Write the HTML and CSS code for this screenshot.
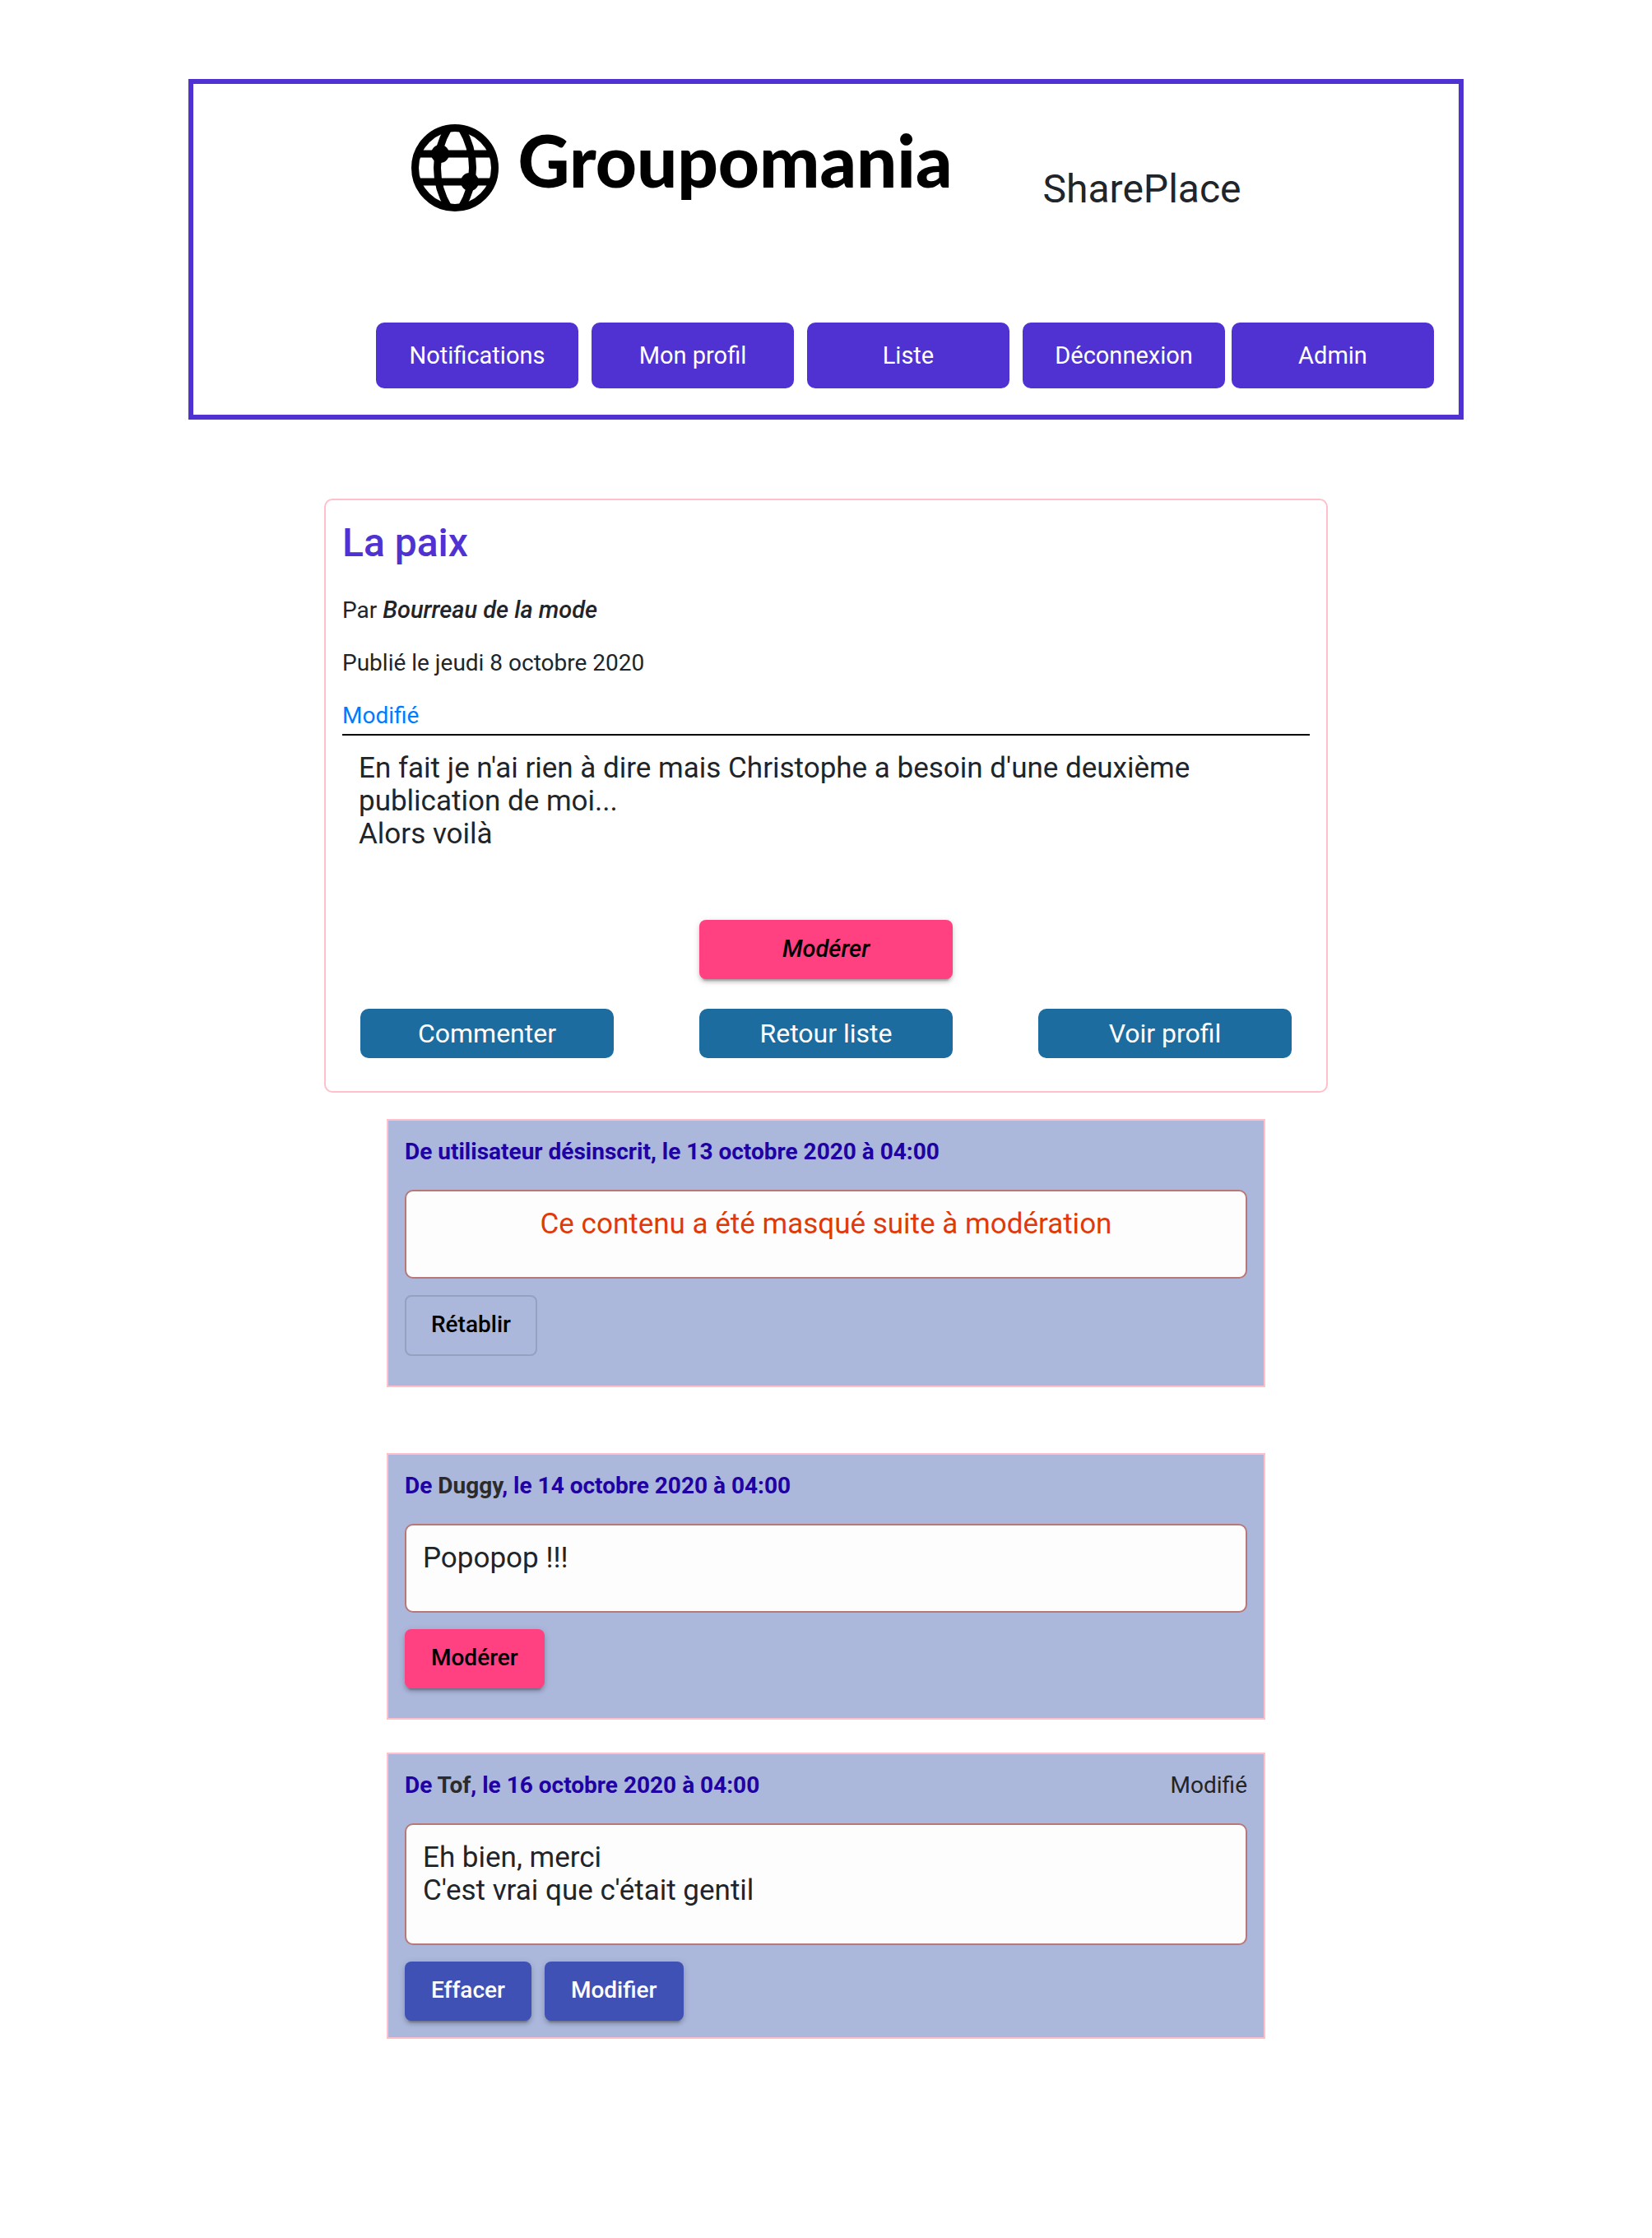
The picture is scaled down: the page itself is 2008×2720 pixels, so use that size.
FILE: index.html
```html
<!DOCTYPE html>
<html lang="fr">
<head>
<meta charset="utf-8">
<meta name="viewport" content="width=device-width, initial-scale=1">
<title>Groupomania – SharePlace</title>
<link rel="stylesheet" href="styles.css">
</head>
<body>
<header class="site-header">
  <div class="brand">
    <a class="logo" href="#">
      <svg class="globe" viewBox="0 0 108 108" aria-hidden="true">
        <g fill="none" stroke="#000" stroke-width="9">
          <circle cx="54" cy="54" r="48.500"/>
          <path d="M8 37H100M8 71H100"/>
          <path d="M46 6C28 36 28 72 46 102M62 6C80 36 80 72 62 102"/>
        </g>
        <circle cx="36" cy="37" r="11"/>
        <circle cx="72" cy="71" r="11"/>
      </svg>
      <span class="logo-name">Groupomania</span>
    </a>
    <h1 class="app-name">SharePlace</h1>
  </div>
  <nav class="main-nav">
    <button type="button" class="nav-button">Notifications</button>
    <button type="button" class="nav-button">Mon profil</button>
    <button type="button" class="nav-button">Liste</button>
    <div class="nav-pair">
      <button type="button" class="nav-button">Déconnexion</button>
      <button type="button" class="nav-button">Admin</button>
    </div>
  </nav>
</header>
<main>
  <article class="post">
    <h2 class="post-title">La paix</h2>
    <div class="post-meta">
      <p>Par <em>Bourreau de la mode</em></p>
      <p>Publié le jeudi 8 octobre 2020</p>
      <p class="edited">Modifié</p>
    </div>
    <p class="post-text">En fait je n'ai rien à dire mais Christophe a besoin d'une deuxième publication de moi...<br>Alors voilà</p>
    <div class="post-actions">
      <button type="button" class="button accent moderate">Modérer</button>
      <button type="button" class="action">Commenter</button>
      <button type="button" class="action">Retour liste</button>
      <button type="button" class="action">Voir profil</button>
    </div>
  </article>
  <section class="comments">
    <article class="comment hidden-content">
      <header class="comment-head"><h3>De utilisateur désinscrit, le 13 octobre 2020 à 04:00</h3></header>
      <p class="comment-text">Ce contenu a été masqué suite à modération</p>
      <div class="comment-actions"><button type="button" class="button outline">Rétablir</button></div>
    </article>
    <article class="comment">
      <header class="comment-head"><h3>De <a href="#">Duggy</a>, le 14 octobre 2020 à 04:00</h3></header>
      <p class="comment-text">Popopop !!!</p>
      <div class="comment-actions"><button type="button" class="button accent">Modérer</button></div>
    </article>
    <article class="comment own">
      <header class="comment-head"><h3>De <a href="#">Tof</a>, le 16 octobre 2020 à 04:00</h3><span>Modifié</span></header>
      <p class="comment-text">Eh bien, merci<br>C'est vrai que c'était gentil</p>
      <div class="comment-actions">
        <button type="button" class="button primary">Effacer</button>
        <button type="button" class="button primary">Modifier</button>
      </div>
    </article>
  </section>
</main>
</body>
</html>
```
FILE: styles.css
```css
*, *::before, *::after { box-sizing: border-box; }

body {
  margin: 0;
  padding: 96px 16px;
  background: #fff;
  color: #212529;
  font: 28px/36px Roboto, "Liberation Sans", sans-serif;
}

h1, h2, h3, p { margin: 0; }

button {
  border: 0;
  cursor: pointer;
  font: inherit;
}

/* Header */
.site-header {
  max-width: 1550px;
  margin: 0 auto 96px;
  padding: 48px 30px 32px;
  border: 6px solid #5032d2;
}

.brand {
  display: flex;
  align-items: flex-start;
  justify-content: center;
  gap: 110px;
  min-height: 242px;
}

.logo {
  display: flex;
  align-items: flex-start;
  gap: 22px;
  color: #000;
  text-decoration: none;
}

.globe { width: 108px; height: 108px; }

.logo-name {
  font: 900 87px/90px Lato, sans-serif;
}

.app-name {
  padding-top: 48px;
  font-size: 48px;
  font-weight: 400;
  line-height: 64px;
}

.main-nav {
  display: flex;
  flex-wrap: wrap;
  justify-content: flex-end;
  gap: 16px;
}

.nav-pair { display: flex; gap: 8px; }

.nav-button {
  width: 246px;
  height: 80px;
  border-radius: 10px;
  background: #5032d2;
  color: #fff;
  font-size: 29px;
}

/* Post */
.post {
  max-width: 1220px;
  margin: 0 auto 32px;
  padding: 20px 20px 40px;
  border: 2px solid pink;
  border-radius: 10px;
}

.post-title {
  margin-bottom: 32px;
  color: #5032d2;
  font-size: 48px;
  font-weight: 500;
  line-height: 64px;
}

.post-meta {
  display: grid;
  gap: 28px;
  padding-bottom: 4px;
  border-bottom: 2px solid #000;
}

.post-meta em {
  font-size: 29px;
  font-weight: 500;
  line-height: 32px;
}

.edited { color: #007bff; }

.post-text {
  padding: 20px 20px 84px;
  font-size: 35px;
  line-height: 40px;
}

.post-actions {
  display: grid;
  grid-template-columns: repeat(3, minmax(0, 308px));
  justify-content: space-between;
  gap: 36px 16px;
  padding: 0 22px;
}

.action {
  height: 60px;
  border-radius: 10px;
  background: #1d6ca0;
  color: #fff;
  font-size: 32px;
}

/* Material-like buttons */
.button {
  height: 72px;
  padding: 0 32px 2px;
  border-radius: 8px;
  font-weight: 500;
}

.accent {
  background: #ff4081;
  color: #000;
}

.primary {
  background: #3f51b5;
  color: #fff;
}

.accent, .primary {
  box-shadow: 0 6px 2px -4px rgba(0, 0, 0, .2), 0 4px 4px rgba(0, 0, 0, .14), 0 2px 10px rgba(0, 0, 0, .12);
}

.outline {
  height: 74px;
  padding: 0 30px 2px;
  border: 2px solid rgba(0, 0, 0, .12);
  background: transparent;
  color: #000;
}

.moderate {
  grid-column: 2;
  font-size: 29px;
  font-style: italic;
}

.moderate + .action { grid-column: 1; }

/* Comments */
.comments {
  display: grid;
  gap: 40px;
  max-width: 1068px;
  margin: 0 auto;
}

.comment {
  padding: 20px 20px 36px;
  border: 2px solid pink;
  background: #abb7db;
}

.hidden-content { margin-bottom: 40px; }

.own { padding-bottom: 20px; }

.comment-head {
  display: flex;
  justify-content: space-between;
  margin-bottom: 28px;
}

.comment-head h3 {
  color: #1f00a3;
  font-size: 28px;
  font-weight: 700;
}

.comment-head a {
  color: #2b2b2b;
  text-decoration: none;
}

.comment-text {
  margin-bottom: 20px;
  padding: 20px 20px 44px;
  border: 2px solid #b87878;
  border-radius: 10px;
  background: #fdfdfd;
  font-size: 35px;
  line-height: 40px;
}

.hidden-content .comment-text {
  color: #e03a0a;
  text-align: center;
}

.comment-actions { display: flex; gap: 16px; }
```
